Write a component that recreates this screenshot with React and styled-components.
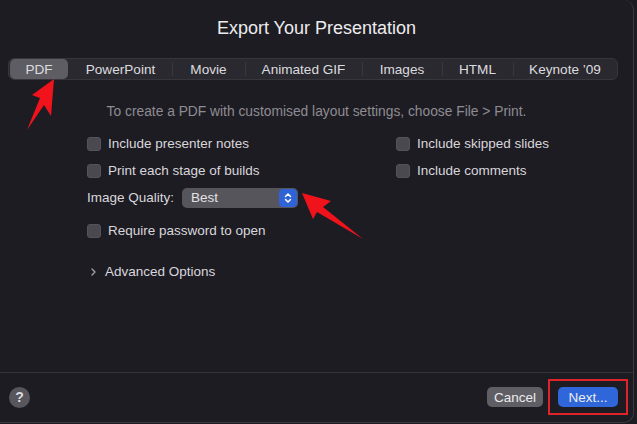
import React from 'react';
import styled, { createGlobalStyle } from 'styled-components';

// ********************** STYLED COMPONENTS ********************************

const GlobalStyle = createGlobalStyle`
  html, body {
    margin: 0;
    padding: 0;
    background: #1e1c23;
  }
  * { box-sizing: border-box; }
`;

const Window = styled.div`
  position: relative;
  width: 634px;
  height: 423px;
  display: flex;
  flex-direction: column;
  background: #1e1c23;
  border-right: 1px solid #3a393f;
  border-bottom: 1px solid #3a393f;
  border-radius: 0 10px 10px 0;
  font-family: "Liberation Sans", Arial, sans-serif;
  color: #d9d8dc;
  overflow: hidden;
`;

const Title = styled.h1`
  margin: 0;
  padding-top: 17px;
  font-size: 18px;
  line-height: 22px;
  font-weight: 400;
  text-align: center;
  color: #ececee;
`;

const Segmented = styled.div`
  display: flex;
  align-self: flex-start;
  margin: 19px 0 0 8px;
  height: 22px;
  background: #2a2930;
  border: 1px solid #37363d;
  border-radius: 6px;
`;

const Segment = styled.div`
  position: relative;
  width: ${p => p.w}px;
  display: flex;
  align-items: center;
  justify-content: center;
  font-size: 13.6px;
  color: #dcdbdf;
  border-radius: 5px;
  background: ${p => (p.active ? '#5e5d63' : 'transparent')};
  margin: ${p => (p.active ? '0 1px' : '0')};
  &::before {
    content: '';
    display: ${p => (p.divider ? 'block' : 'none')};
    position: absolute;
    left: 0;
    top: 3px;
    width: 1px;
    height: 14px;
    background: #38373e;
  }
`;

const Hint = styled.p`
  margin: 24px 0 0;
  font-size: 13.8px;
  line-height: 16px;
  text-align: center;
  color: #8d8c92;
`;

const Options = styled.div`
  display: grid;
  grid-template-columns: 309px 1fr;
  margin: 10px 0 0 87px;
`;

const Column = styled.div`
  display: flex;
  flex-direction: column;
`;

const Row = styled.div`
  display: flex;
  align-items: center;
  height: 27px;
  gap: 7px;
  margin-top: ${p => p.mt || 0}px;
  font-size: 13.5px;
  color: #d8d7db;
`;

const Box = styled.span`
  width: 14px;
  height: 14px;
  border-radius: 3px;
  background: #4a494f;
  border: 1px solid #545359;
  flex-shrink: 0;
`;

const FieldLabel = styled.span`
  margin-right: 1px;
`;

const Select = styled.div`
  display: flex;
  align-items: center;
  justify-content: space-between;
  width: 116px;
  height: 20px;
  padding: 0 1px 0 9px;
  background: #56555b;
  border-radius: 5px;
  color: #e2e1e4;
`;

const Stepper = styled.span`
  width: 18px;
  height: 18px;
  border-radius: 4px;
  background: #2f63d6;
  display: flex;
  align-items: center;
  justify-content: center;
`;

const Disclosure = styled.div`
  display: flex;
  align-items: center;
  gap: 9px;
  height: 27px;
  margin-top: 14px;
  padding-left: 4px;
  font-size: 13.5px;
  color: #d8d7db;
`;

const Spacer = styled.div`
  flex: 1;
`;

const Footer = styled.div`
  display: flex;
  align-items: center;
  height: 50px;
  padding: 0 5px 1px 9px;
  border-top: 1px solid #34333a;
`;

const Help = styled.span`
  width: 21px;
  height: 21px;
  border-radius: 50%;
  background: #57565c;
  color: #dedde0;
  font-size: 14px;
  font-weight: 700;
  display: flex;
  align-items: center;
  justify-content: center;
`;

const Button = styled.button`
  height: 20px;
  width: ${p => p.w}px;
  border: none;
  border-radius: 5px;
  padding: 0;
  font-family: inherit;
  font-size: 13.5px;
  color: #ececee;
  background: ${p => (p.primary ? '#2f67da' : '#5f5e64')};
`;

const Highlight = styled.div`
  margin-left: 5px;
  padding: 6px 8px;
  border: 2px solid #e0232b;
  display: flex;
`;

const Annotations = styled.svg`
  position: absolute;
  left: 0;
  top: 0;
  pointer-events: none;
`;

// ********************** STYLED COMPONENTS END ********************************

const tabs = [
  ['PDF', 60],
  ['PowerPoint', 103],
  ['Movie', 73],
  ['Animated GIF', 117],
  ['Images', 80],
  ['HTML', 71],
  ['Keynote \u201909', 104],
];

const Check = ({ children }) => (
  <Row>
    <Box />
    <span>{children}</span>
  </Row>
);

const App = () => {
  return (
    <Window>
      <GlobalStyle />
      <Title>Export Your Presentation</Title>

      <Segmented>
        {tabs.map(([name, w], i) => (
          <Segment key={name} w={i === 0 ? w - 2 : w} active={i === 0} divider={i > 1}>
            {name}
          </Segment>
        ))}
      </Segmented>

      <Hint>To create a PDF with customised layout settings, choose File &gt; Print.</Hint>

      <Options>
        <Column>
          <Check>Include presenter notes</Check>
          <Check>Print each stage of builds</Check>
          <Row>
            <FieldLabel>Image Quality:</FieldLabel>
            <Select>
              <span>Best</span>
              <Stepper>
                <svg width="8" height="12" viewBox="0 0 8 12" fill="none" stroke="#fff" strokeWidth="1.5" strokeLinecap="round" strokeLinejoin="round">
                  <path d="M1.5 4.5 L4 2 L6.5 4.5" />
                  <path d="M1.5 7.5 L4 10 L6.5 7.5" />
                </svg>
              </Stepper>
            </Select>
          </Row>
          <Row mt={6}>
            <Box />
            <span>Require password to open</span>
          </Row>
          <Disclosure>
            <svg width="5" height="8" viewBox="0 0 5 8" fill="none" stroke="#a6a5aa" strokeWidth="1.3" strokeLinecap="round" strokeLinejoin="round">
              <path d="M1 1 L4 4 L1 7" />
            </svg>
            <span>Advanced Options</span>
          </Disclosure>
        </Column>
        <Column>
          <Check>Include skipped slides</Check>
          <Check>Include comments</Check>
        </Column>
      </Options>

      <Spacer />

      <Footer>
        <Help>?</Help>
        <Spacer />
        <Button w={56}>Cancel</Button>
        <Highlight>
          <Button primary w={60}>Next...</Button>
        </Highlight>
      </Footer>

      {/* red callout arrows drawn over the dialog */}
      <Annotations width="634" height="423" viewBox="0 0 634 423">
        <polygon points="54,79 51,116 44,105 27,130 40,98 32,95" fill="#f0131b" />
        <polygon points="302,193 331,201 323,207 363,239 317,212 313,219" fill="#f0131b" />
      </Annotations>
    </Window>
  );
};

export default App;
